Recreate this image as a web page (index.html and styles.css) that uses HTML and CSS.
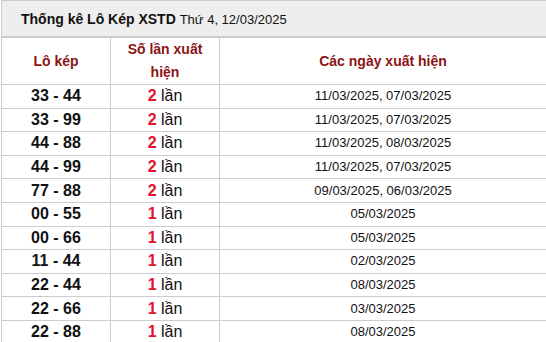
FILE: index.html
```html
<!DOCTYPE html>
<html lang="vi">
<head>
<meta charset="utf-8">
<link rel="stylesheet" href="styles.css">
</head>
<body>
<table class="stats">
  <caption class="title"><b>Thống kê Lô Kép XSTD</b> <span class="day">Thứ 4, 12/03/2025</span></caption>
  <colgroup><col class="c1"><col class="c2"><col class="c3"></colgroup>
  <thead>
    <tr class="head"><th>Lô kép</th><th>Số lần xuất hiện</th><th>Các ngày xuất hiện</th></tr>
  </thead>
  <tbody>
    <tr><td class="pair">33 - 44</td><td class="count"><b>2</b> lần</td><td class="dates">11/03/2025, 07/03/2025</td></tr>
    <tr><td class="pair">33 - 99</td><td class="count"><b>2</b> lần</td><td class="dates">11/03/2025, 07/03/2025</td></tr>
    <tr><td class="pair">44 - 88</td><td class="count"><b>2</b> lần</td><td class="dates">11/03/2025, 08/03/2025</td></tr>
    <tr><td class="pair">44 - 99</td><td class="count"><b>2</b> lần</td><td class="dates">11/03/2025, 07/03/2025</td></tr>
    <tr><td class="pair">77 - 88</td><td class="count"><b>2</b> lần</td><td class="dates">09/03/2025, 06/03/2025</td></tr>
    <tr><td class="pair">00 - 55</td><td class="count"><b>1</b> lần</td><td class="dates">05/03/2025</td></tr>
    <tr><td class="pair">00 - 66</td><td class="count"><b>1</b> lần</td><td class="dates">05/03/2025</td></tr>
    <tr><td class="pair">11 - 44</td><td class="count"><b>1</b> lần</td><td class="dates">02/03/2025</td></tr>
    <tr><td class="pair">22 - 44</td><td class="count"><b>1</b> lần</td><td class="dates">08/03/2025</td></tr>
    <tr><td class="pair">22 - 66</td><td class="count"><b>1</b> lần</td><td class="dates">03/03/2025</td></tr>
    <tr><td class="pair">22 - 88</td><td class="count"><b>1</b> lần</td><td class="dates">08/03/2025</td></tr>
  </tbody>
</table>
</body>
</html>
```
FILE: styles.css
```css
html, body {
  margin: 0;
  padding: 0;
  background: #ffffff;
}
body {
  font-family: "Liberation Sans", Arial, sans-serif;
  color: #111111;
  padding-left: 1px;
}
.stats {
  width: 545px;
  border-collapse: collapse;
  table-layout: fixed;
  border-left: 1px solid #cccccc;
}
.title {
  caption-side: top;
  text-align: left;
  background: #efeeee;
  border-top: 1px solid #cccccc;
  border-bottom: 1px solid #cccccc;
  border-left: 1px solid #cccccc;
  height: 37px;
  box-sizing: border-box;
  padding: 0 0 0 19px;
  line-height: 37px;
  font-size: 14px;
  color: #111111;
}
.title b {
  font-weight: bold;
}
.title .day {
  font-size: 13px;
}
.c1 { width: 109px; }
.c2 { width: 109px; }
.c3 { width: auto; }
.stats th, .stats td {
  border-top: 1px solid #cccccc;
  border-right: 1px solid #cccccc;
  text-align: center;
  padding: 0;
}
.stats th:last-child, .stats td:last-child {
  border-right: none;
}
.head th {
  height: 44px;
  color: #8b1414;
  font-size: 14px;
  font-weight: bold;
  line-height: 23px;
}
.head th:nth-child(2) {
  padding: 0 8px;
}
.stats tbody td {
  height: 22.6px;
  line-height: 22px;
}
.pair {
  font-size: 16px;
  font-weight: bold;
  color: #111111;
}
.count {
  font-size: 16px;
  color: #111111;
}
.count b {
  color: #e3102e;
  font-weight: bold;
}
.dates {
  font-size: 13px;
  color: #111111;
}
.stats tbody tr:last-child td {
  border-bottom: 1px solid #cccccc;
}
```
